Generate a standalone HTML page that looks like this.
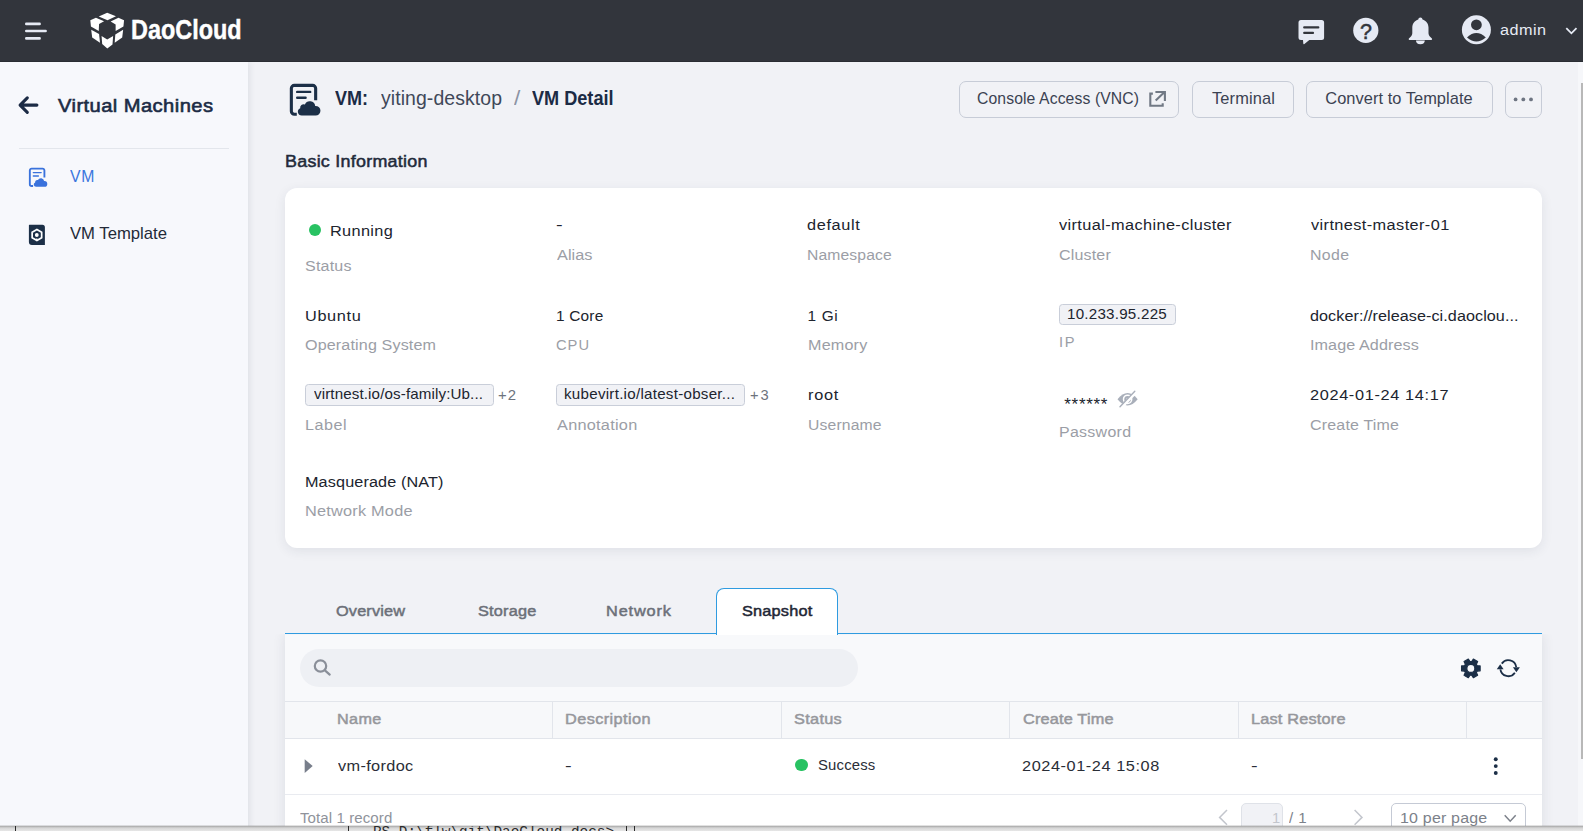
<!DOCTYPE html>
<html lang="en">
<head>
<meta charset="utf-8">
<title>VM Detail - Virtual Machines - DaoCloud</title>
<style>
html,body{margin:0;padding:0}
body{width:1583px;height:831px;overflow:hidden;position:relative;background:#f1f2f6;font-family:"Liberation Sans",sans-serif;font-size:15.4px;color:#20242e}
div,span,header,aside,main,section,nav{box-sizing:border-box}
.abs{position:absolute}
.t{position:absolute;white-space:pre;line-height:normal;transform-origin:0 50%;display:block}
header{position:absolute;left:0;top:0;width:1583px;height:62px;background:#32353c;z-index:5;box-shadow:inset 0 -1px 0 #2a2d33}
aside{position:absolute;left:0;top:62px;width:248px;height:769px;background:#f7f8fc;box-shadow:1px 0 7px rgba(30,40,60,.10);z-index:3}
aside .divider{position:absolute;left:19px;top:86px;width:210px;height:1px;background:#e3e6ec}
main{position:absolute;left:248px;top:62px;width:1335px;height:769px;z-index:1}
.btn{position:absolute;top:81px;height:36.5px;border:1px solid #c7ccd7;border-radius:7px}
.card{position:absolute;left:285px;top:188px;width:1257px;height:360px;background:#fff;border-radius:12px;box-shadow:0 3px 12px rgba(40,50,70,.085)}
.tag{position:absolute;background:#f1f2f6;border:1px solid #c9ced9;border-radius:3.5px}
.dot{position:absolute;width:12px;height:12px;border-radius:50%;background:#28c262}
.tabline{position:absolute;left:285px;top:633px;width:1257px;height:1.3px;background:#2f9be0}
.tabactive{position:absolute;left:715.75px;top:588px;width:121.75px;height:47px;background:#fff;border:1.2px solid #2f9be0;border-bottom:none;border-radius:8px 8px 0 0}
.panel{position:absolute;left:285px;top:634.3px;width:1257px;height:200px;background:#f8f9fb;box-shadow:0 0 12px rgba(40,50,70,.10);clip-path:inset(0 -20px -20px -20px)}
.search{position:absolute;left:300px;top:648.75px;width:557.5px;height:38px;border-radius:19px;background:#eef0f4}
.thead{position:absolute;left:285px;top:701px;width:1257px;height:37.5px;border-top:1px solid #e2e5eb;border-bottom:1px solid #e2e5eb;background:#f7f8fa}
.colsep{position:absolute;top:701px;width:1px;height:37px;background:#e2e5eb}
.trow{position:absolute;left:285px;top:738.5px;width:1257px;height:56px;background:#fff;border-bottom:1px solid #e9ebf0}
.tfoot{position:absolute;left:285px;top:794.5px;width:1257px;height:40px;background:#fff}
.pginput{position:absolute;left:1240.75px;top:803px;width:42.5px;height:36px;background:#f1f2f6;border:1px solid #dfe2e8;border-radius:5px}
.pgsel{position:absolute;left:1390.75px;top:803px;width:135.5px;height:36px;background:#fff;border:1px solid #c5cad5;border-radius:5px}
.sbtrack{position:absolute;left:1578px;top:62px;width:5px;height:764px;background:#f6f7fa;z-index:6}
.sbthumb{position:absolute;left:1581px;top:82.75px;width:2px;height:676.5px;background:#b8b8b8;z-index:7}
.bottom{position:absolute;left:0;top:826px;width:1583px;height:5px;z-index:9;background:linear-gradient(#a4a4a4 0,#c6c6c6 1.2px,#dadada 2.6px,#e6e6e6 100%);overflow:hidden;box-shadow:0 -1px 0 rgba(120,120,120,.22)}
.bottom i{position:absolute;top:0;width:1.3px;height:5px;background:#2a2a2a}
.bottom span{position:absolute;left:373px;top:-2.3px;font-family:"Liberation Mono",monospace;font-size:14.35px;line-height:normal;color:#2b2b2b;white-space:pre}
svg.icons{position:absolute;left:0;top:0;width:1583px;height:831px;z-index:8;pointer-events:none}
.t{z-index:8}
</style>
</head>
<body>
<header></header>
<aside><div class="divider"></div></aside>
<main></main>

<div class="btn" style="left:959px;width:219.5px"></div>
<div class="btn" style="left:1192px;width:101.75px"></div>
<div class="btn" style="left:1306.25px;width:186.25px"></div>
<div class="btn" style="left:1505px;width:36.5px"></div>

<section class="card"></section>
<div class="dot" style="left:308.75px;top:224.25px"></div>
<div class="tag" style="left:1059px;top:304.25px;width:116.75px;height:20.25px"></div>
<div class="tag" style="left:305px;top:384.25px;width:188.75px;height:21.5px"></div>
<div class="tag" style="left:555.75px;top:384.25px;width:188.75px;height:21.5px"></div>

<div class="panel"></div>
<div class="tabline"></div>
<div class="tabactive"></div>
<div class="search"></div>
<div class="thead"></div>
<div class="colsep" style="left:552px"></div>
<div class="colsep" style="left:781px"></div>
<div class="colsep" style="left:1009px"></div>
<div class="colsep" style="left:1238px"></div>
<div class="colsep" style="left:1466px"></div>
<div class="trow"></div>
<div class="tfoot"></div>
<div class="dot" style="left:795px;top:758.5px;width:12.5px;height:12.5px"></div>
<div class="pginput"></div>
<div class="pgsel"></div>

<div class="sbtrack"></div>
<div class="sbthumb"></div>
<div class="bottom"><i style="left:15px"></i><i style="left:347.6px"></i><i style="left:626px"></i><i style="left:634px"></i><span>PS D:\flw\git\DaoCloud-docs&gt;</span></div>

<svg class="icons" viewBox="0 0 1583 831">
<g stroke="#e6eaf4" stroke-width="2.6" stroke-linecap="round"><path d="M26.3 23.9H39.6M26.3 31H45.6M26.3 38.4H39.6"/></g>
<g fill="#fff"><polygon points="98.75,16.56 107.19,12.81 115.94,16.25 107.5,20.31"/><polygon points="90.31,20.31 95.94,17.81 104.06,21.25 99.06,24.06 98.75,30.94 90.94,26.56"/><polygon points="110.63,21.56 118.44,17.81 124.06,20.31 123.44,26.56 115.63,30.94 115.63,24.38"/><polygon points="91.25,29.69 99.06,34.06 100,42.81 92.19,37.5"/><polygon points="123.13,29.69 115.31,34.38 114.69,42.81 122.19,37.5"/><polygon points="101.56,35.94 107.19,39.38 113.13,35.94 112.5,44.38 107.31,48.44 102.19,44.06"/></g>
<path fill="#e6eaf4" d="M1301 20.100h20.600a2.500 2.500 0 0 1 2.500 2.500v14.900a2.500 2.500 0 0 1-2.500 2.500h-12.300l-4.900 3.900a.7.7 0 0 1-1.100-.5l-.3-3.400h-2a2.500 2.500 0 0 1-2.500-2.500v-14.900a2.500 2.500 0 0 1 2.500-2.500z"/>
<path stroke="#32353c" stroke-width="2.2" stroke-linecap="round" d="M1304.200 27.400H1318.300M1304.200 32.900H1313"/>
<circle cx="1365.8" cy="30.4" r="12.6" fill="#e6eaf4"/>
<text x="1365.9" y="38.8" text-anchor="middle" font-family="Liberation Sans, sans-serif" font-weight="400" font-size="21.5" stroke="#32353c" stroke-width="0.5" fill="#32353c">?</text>
<path fill="#e6eaf4" d="M1420.400 17.500c1.200 0 2 .8 2.100 1.900 3.600 1 6 4.200 6 8.200v5.400c0 1.500.6 2.800 1.600 3.800l1.800 1.800c.5.500.2 1.300-.5 1.300h-22c-.7 0-1-.8-.5-1.300l1.800-1.800c1-1 1.600-2.300 1.600-3.800v-5.400c0-4 2.400-7.200 6-8.200.1-1.100.9-1.900 2.100-1.900z"/>
<path fill="#e6eaf4" d="M1416 40.600h8.800a4.400 3.700 0 0 1-8.800 0z"/>
<circle cx="1476.4" cy="29.7" r="14.5" fill="#e6eaf4"/><circle cx="1476.4" cy="24.8" r="5.4" fill="#32353c"/><path fill="#32353c" d="M1467 37.400q9.400-8.800 18.800 0q-9.400 8-18.800 0z"/>
<path fill="none" stroke="#e6eaf4" stroke-width="1.8" d="M1566.300 28.200l5.100 5.100 5.100-5.100"/>
<path fill="none" stroke="#1c2b45" stroke-width="3.1" stroke-linecap="round" stroke-linejoin="round" d="M36.900 105.100H20.400M27.300 97.900L20.100 105.100l7.200 7.200"/>
<g transform="translate(289.8 83.8)"><g fill="none" stroke="#1c2f47" stroke-linecap="butt">
<path stroke-width="3.1" d="M25.85 16.400V4.550a3 3 0 0 0-3-3H4.550a3 3 0 0 0-3 3v22.900a3 3 0 0 0 3 3H7"/>
<path stroke-width="2.4" stroke-linecap="round" d="M7.400 8.100H20.400M7.400 13.900H15.800"/></g>
<path fill="#1c2f47" d="M11.900 31.800a3.800 3.800 0 0 1-1.500-7.300 3.500 3.500 0 0 1 4.700-3.900 5.400 5.400 0 0 1 10.300 1.500 3.200 3.200 0 0 1 .4 0 3.850 3.850 0 0 1 0 9.700z"/></g>
<g transform="translate(28.9 167.75) scale(0.6)"><g fill="none" stroke="#3a72dc" stroke-linecap="butt">
<path stroke-width="3.1" d="M25.85 16.400V4.550a3 3 0 0 0-3-3H4.550a3 3 0 0 0-3 3v22.900a3 3 0 0 0 3 3H7"/>
<path stroke-width="2.4" stroke-linecap="round" d="M7.400 8.100H20.400M7.400 13.900H15.800"/></g>
<path fill="#3a72dc" d="M11.900 31.800a3.800 3.800 0 0 1-1.500-7.300 3.500 3.500 0 0 1 4.700-3.900 5.400 5.400 0 0 1 10.300 1.500 3.200 3.200 0 0 1 .4 0 3.850 3.850 0 0 1 0 9.700z"/></g>
<path fill="#1c2f47" d="M29.400 224.800h13a2.500 2.500 0 0 1 2.500 2.500v17.700h-13a3 3 0 0 1-3-3v-16.700a.5.5 0 0 1 .5-.5z"/>
<polygon fill="none" stroke="#fff" stroke-width="1.7" points="36.90,229.50 41.66,232.25 41.66,237.75 36.90,240.50 32.14,237.75 32.14,232.25"/>
<circle cx="36.8" cy="235" r="1.9" fill="#fff"/><path stroke="#fff" stroke-width="1.3" d="M36.800 238.500V240.600"/>
<g fill="none" stroke="#717985" stroke-width="2.1"><path d="M1152.900 93.600H1150.300V105.800H1162.700V103.200"/><path d="M1155.700 100.500L1164.300 92.300M1155.400 92H1164.900V101"/></g>
<g fill="#6e7582"><circle cx="1515.600" cy="99.400" r="1.900"/><circle cx="1523.300" cy="99.400" r="1.900"/><circle cx="1531" cy="99.400" r="1.900"/></g>
<path fill="#a9afba" d="M1117.500 399.300Q1127.600 386.800 1137.700 399.300Q1127.600 411.800 1117.500 399.300z"/><circle cx="1127.600" cy="399.300" r="4.100" fill="none" stroke="#fff" stroke-width="1.500"/><circle cx="1127.600" cy="399.300" r="1.200" fill="#fff"/>
<path stroke="#fff" stroke-width="3.400" d="M1136.200 391.700L1121.300 407.400"/><path stroke="#a9afba" stroke-width="1.400" stroke-linecap="round" d="M1134.800 391.300L1120 406.800"/>
<g fill="none" stroke="#8a8f99" stroke-width="2.200" stroke-linecap="round"><circle cx="320.500" cy="666" r="5.700"/><path d="M324.900 670.400L329.700 674.600"/></g>
<path fill="#1c2f47" fill-rule="evenodd" stroke="#1c2f47" stroke-width="1.2" stroke-linejoin="round" d="M1477.21 665.71 L1480.13 665.93 L1480.13 670.87 L1477.21 671.09 L1476.35 672.56 L1477.63 675.20 L1473.35 677.67 L1471.70 675.25 L1470.00 675.25 L1468.35 677.67 L1464.07 675.20 L1465.35 672.56 L1464.49 671.09 L1461.57 670.87 L1461.57 665.93 L1464.49 665.71 L1465.35 664.24 L1464.07 661.60 L1468.35 659.13 L1470.00 661.55 L1471.70 661.55 L1473.35 659.13 L1477.63 661.60 L1476.35 664.24Z M1474.85 668.40 a4.0 4.0 0 1 0 -8.0 0 a4.0 4.0 0 1 0 8.0 0Z"/>
<g fill="none" stroke="#1c2f47" stroke-width="1.800"><path d="M1501.75 663.61A8.0 8.0 0 0 1 1516.22 667.09"/><path d="M1514.85 672.79A8.0 8.0 0 0 1 1500.38 669.31"/></g>
<path fill="#1c2f47" d="M1512.900 667.200h7l-3.500 5.100z"/><path fill="#1c2f47" d="M1496.800 669.200h6.800l-3.400-5z"/>
<polygon fill="#787e8b" points="304.700,759.200 312.700,766.100 304.700,773"/>
<g fill="#1c2f47"><circle cx="1495.750" cy="759.300" r="1.950"/><circle cx="1495.750" cy="766.100" r="1.950"/><circle cx="1495.750" cy="773" r="1.950"/></g>
<g fill="none" stroke="#c3c6cd" stroke-width="1.500"><path d="M1227 810L1219.600 817.400 1227 824.800"/><path d="M1354.600 810L1362 817.400 1354.600 824.800"/></g>
<path fill="none" stroke="#7c818a" stroke-width="1.500" d="M1504.700 815.200l5.500 6 5.500-6"/>
</svg>

<span class="t" style='font-family:"Liberation Sans", sans-serif;font-size:28px;font-weight:700;color:#ffffff;left:130.90px;top:13.60px;transform:scaleX(0.8361);-webkit-text-stroke:0.45px #fff;'>DaoCloud</span>
<span class="t" style='font-family:"Liberation Sans", sans-serif;font-size:15.4px;font-weight:400;color:#e6eaf4;left:1500.30px;top:21.00px;transform:scaleX(1.0543);letter-spacing:0.427px;'>admin</span>
<span class="t" style='font-family:"Liberation Sans", sans-serif;font-size:19.0px;font-weight:400;color:#1c2b45;left:57.50px;top:94.60px;transform:scaleX(1.0600);letter-spacing:0.408px;-webkit-text-stroke:0.6px currentColor;'>Virtual Machines</span>
<span class="t" style='font-family:"Liberation Sans", sans-serif;font-size:16.4px;font-weight:400;color:#3b76de;left:70.20px;top:166.90px;transform:scaleX(0.9637);letter-spacing:0.830px;'>VM</span>
<span class="t" style='font-family:"Liberation Sans", sans-serif;font-size:16.4px;font-weight:400;color:#232a38;left:70.20px;top:224.10px;transform:scaleX(1.0172);'>VM Template</span>
<span class="t" style='font-family:"Liberation Sans", sans-serif;font-size:19.4px;font-weight:700;color:#1c2b45;left:335.00px;top:87.40px;transform:scaleX(0.9293);'>VM:</span>
<span class="t" style='font-family:"Liberation Sans", sans-serif;font-size:19.6px;font-weight:400;color:#3f4859;left:381.00px;top:87.40px;transform:scaleX(0.9925);letter-spacing:0.078px;'>yiting-desktop</span>
<span class="t" style='font-family:"Liberation Sans", sans-serif;font-size:19.6px;font-weight:400;color:#8b93a3;left:513.50px;top:87.40px;transform:scaleX(1.1567);'>/</span>
<span class="t" style='font-family:"Liberation Sans", sans-serif;font-size:19.4px;font-weight:700;color:#1c2b45;left:532.25px;top:87.40px;transform:scaleX(0.9341);'>VM Detail</span>
<span class="t" style='font-family:"Liberation Sans", sans-serif;font-size:16.4px;font-weight:400;color:#3b4252;left:976.50px;top:89.10px;transform:scaleX(0.9598);letter-spacing:0.110px;'>Console Access (VNC)</span>
<span class="t" style='font-family:"Liberation Sans", sans-serif;font-size:16.4px;font-weight:400;color:#3b4252;left:1212.00px;top:89.10px;letter-spacing:0.143px;'>Terminal</span>
<span class="t" style='font-family:"Liberation Sans", sans-serif;font-size:16.4px;font-weight:400;color:#3b4252;left:1325.25px;top:89.10px;letter-spacing:0.056px;'>Convert to Template</span>
<span class="t" style='font-family:"Liberation Sans", sans-serif;font-size:16.9px;font-weight:400;color:#222a3a;left:284.50px;top:151.90px;transform:scaleX(1.0600);letter-spacing:0.246px;-webkit-text-stroke:0.5px currentColor;'>Basic Information</span>
<span class="t" style='font-family:"Liberation Sans", sans-serif;font-size:15.4px;font-weight:400;color:#20242e;left:330.25px;top:222.25px;transform:scaleX(1.0594);letter-spacing:0.315px;'>Running</span>
<span class="t" style='font-family:"Liberation Sans", sans-serif;font-size:15.4px;font-weight:400;color:#9b9ea6;left:304.50px;top:257.00px;transform:scaleX(1.0426);letter-spacing:0.192px;'>Status</span>
<span class="t" style='font-family:"Liberation Sans", sans-serif;font-size:15.4px;font-weight:400;color:#20242e;left:556.25px;top:216.00px;transform:scaleX(1.2931);'>-</span>
<span class="t" style='font-family:"Liberation Sans", sans-serif;font-size:15.4px;font-weight:400;color:#9b9ea6;left:556.75px;top:246.00px;transform:scaleX(1.0600);letter-spacing:0.033px;'>Alias</span>
<span class="t" style='font-family:"Liberation Sans", sans-serif;font-size:15.4px;font-weight:400;color:#20242e;left:806.75px;top:216.00px;transform:scaleX(1.0600);letter-spacing:0.591px;'>default</span>
<span class="t" style='font-family:"Liberation Sans", sans-serif;font-size:15.4px;font-weight:400;color:#9b9ea6;left:806.75px;top:246.00px;transform:scaleX(1.0198);letter-spacing:0.123px;'>Namespace</span>
<span class="t" style='font-family:"Liberation Sans", sans-serif;font-size:15.4px;font-weight:400;color:#20242e;left:1059.00px;top:216.00px;transform:scaleX(1.0600);letter-spacing:0.360px;'>virtual-machine-cluster</span>
<span class="t" style='font-family:"Liberation Sans", sans-serif;font-size:15.4px;font-weight:400;color:#9b9ea6;left:1058.50px;top:246.00px;transform:scaleX(1.0410);letter-spacing:0.160px;'>Cluster</span>
<span class="t" style='font-family:"Liberation Sans", sans-serif;font-size:15.4px;font-weight:400;color:#20242e;left:1310.75px;top:216.00px;transform:scaleX(1.0600);letter-spacing:0.377px;'>virtnest-master-01</span>
<span class="t" style='font-family:"Liberation Sans", sans-serif;font-size:15.4px;font-weight:400;color:#9b9ea6;left:1309.75px;top:246.00px;transform:scaleX(1.0327);letter-spacing:0.323px;'>Node</span>
<span class="t" style='font-family:"Liberation Sans", sans-serif;font-size:15.4px;font-weight:400;color:#20242e;left:304.50px;top:307.25px;transform:scaleX(1.0600);letter-spacing:0.591px;'>Ubuntu</span>
<span class="t" style='font-family:"Liberation Sans", sans-serif;font-size:15.4px;font-weight:400;color:#9b9ea6;left:304.50px;top:336.00px;transform:scaleX(1.0472);letter-spacing:0.127px;'>Operating System</span>
<span class="t" style='font-family:"Liberation Sans", sans-serif;font-size:15.4px;font-weight:400;color:#20242e;left:556.00px;top:307.25px;letter-spacing:0.200px;'>1 Core</span>
<span class="t" style='font-family:"Liberation Sans", sans-serif;font-size:15.4px;font-weight:400;color:#9b9ea6;left:556.00px;top:336.00px;transform:scaleX(0.9538);letter-spacing:1.048px;'>CPU</span>
<span class="t" style='font-family:"Liberation Sans", sans-serif;font-size:15.4px;font-weight:400;color:#20242e;left:807.50px;top:307.25px;letter-spacing:0.666px;'>1 Gi</span>
<span class="t" style='font-family:"Liberation Sans", sans-serif;font-size:15.4px;font-weight:400;color:#9b9ea6;left:807.50px;top:336.00px;transform:scaleX(1.0478);letter-spacing:0.191px;'>Memory</span>
<span class="t" style='font-family:"Liberation Sans", sans-serif;font-size:14.3px;font-weight:400;color:#20242e;left:1067.25px;top:306.00px;transform:scaleX(1.0600);letter-spacing:0.222px;'>10.233.95.225</span>
<span class="t" style='font-family:"Liberation Sans", sans-serif;font-size:15.4px;font-weight:400;color:#9b9ea6;left:1058.50px;top:333.00px;transform:scaleX(0.9500);letter-spacing:1.769px;'>IP</span>
<span class="t" style='font-family:"Liberation Sans", sans-serif;font-size:15.4px;font-weight:400;color:#20242e;left:1309.50px;top:307.25px;transform:scaleX(1.0495);letter-spacing:0.066px;'>docker://release-ci.daoclou...</span>
<span class="t" style='font-family:"Liberation Sans", sans-serif;font-size:15.4px;font-weight:400;color:#9b9ea6;left:1309.50px;top:336.00px;transform:scaleX(1.0495);letter-spacing:0.079px;'>Image Address</span>
<span class="t" style='font-family:"Liberation Sans", sans-serif;font-size:14.3px;font-weight:400;color:#20242e;left:313.75px;top:386.25px;transform:scaleX(1.0600);letter-spacing:0.112px;'>virtnest.io/os-family:Ub...</span>
<span class="t" style='font-family:"Liberation Sans", sans-serif;font-size:14.3px;font-weight:400;color:#6d737d;left:498.25px;top:387.00px;transform:scaleX(1.0421);letter-spacing:0.960px;'>+2</span>
<span class="t" style='font-family:"Liberation Sans", sans-serif;font-size:15.4px;font-weight:400;color:#9b9ea6;left:304.50px;top:416.00px;transform:scaleX(1.0485);letter-spacing:0.477px;'>Label</span>
<span class="t" style='font-family:"Liberation Sans", sans-serif;font-size:14.3px;font-weight:400;color:#20242e;left:564.00px;top:386.25px;transform:scaleX(1.0600);letter-spacing:0.244px;'>kubevirt.io/latest-obser...</span>
<span class="t" style='font-family:"Liberation Sans", sans-serif;font-size:14.3px;font-weight:400;color:#6d737d;left:749.50px;top:387.00px;transform:scaleX(1.0268);letter-spacing:1.948px;'>+3</span>
<span class="t" style='font-family:"Liberation Sans", sans-serif;font-size:15.4px;font-weight:400;color:#9b9ea6;left:557.00px;top:416.00px;transform:scaleX(1.0600);letter-spacing:0.233px;'>Annotation</span>
<span class="t" style='font-family:"Liberation Sans", sans-serif;font-size:15.4px;font-weight:400;color:#20242e;left:807.50px;top:385.50px;transform:scaleX(1.0600);letter-spacing:0.669px;'>root</span>
<span class="t" style='font-family:"Liberation Sans", sans-serif;font-size:15.4px;font-weight:400;color:#9b9ea6;left:807.50px;top:416.00px;transform:scaleX(1.0211);letter-spacing:0.140px;'>Username</span>
<span class="t" style='font-family:"Liberation Sans", sans-serif;font-size:17px;font-weight:400;color:#20242e;left:1064.25px;top:394.90px;letter-spacing:0.709px;'>******</span>
<span class="t" style='font-family:"Liberation Sans", sans-serif;font-size:15.4px;font-weight:400;color:#9b9ea6;left:1058.50px;top:423.00px;transform:scaleX(1.0358);letter-spacing:0.276px;'>Password</span>
<span class="t" style='font-family:"Liberation Sans", sans-serif;font-size:15.4px;font-weight:400;color:#20242e;left:1309.50px;top:386.00px;transform:scaleX(1.0600);letter-spacing:0.609px;'>2024-01-24 14:17</span>
<span class="t" style='font-family:"Liberation Sans", sans-serif;font-size:15.4px;font-weight:400;color:#9b9ea6;left:1309.50px;top:416.00px;transform:scaleX(1.0378);letter-spacing:0.193px;'>Create Time</span>
<span class="t" style='font-family:"Liberation Sans", sans-serif;font-size:15.4px;font-weight:400;color:#20242e;left:304.50px;top:473.00px;transform:scaleX(1.0521);letter-spacing:0.127px;'>Masquerade (NAT)</span>
<span class="t" style='font-family:"Liberation Sans", sans-serif;font-size:15.4px;font-weight:400;color:#9b9ea6;left:304.50px;top:502.25px;transform:scaleX(1.0600);letter-spacing:0.198px;'>Network Mode</span>
<span class="t" style='font-family:"Liberation Sans", sans-serif;font-size:15.4px;font-weight:400;color:#6c7079;left:336.25px;top:602.25px;transform:scaleX(1.0600);letter-spacing:0.136px;-webkit-text-stroke:0.5px currentColor;'>Overview</span>
<span class="t" style='font-family:"Liberation Sans", sans-serif;font-size:15.4px;font-weight:400;color:#6c7079;left:477.50px;top:602.25px;transform:scaleX(1.0600);letter-spacing:0.174px;-webkit-text-stroke:0.5px currentColor;'>Storage</span>
<span class="t" style='font-family:"Liberation Sans", sans-serif;font-size:15.4px;font-weight:400;color:#6c7079;left:605.75px;top:602.25px;transform:scaleX(1.0600);letter-spacing:0.811px;-webkit-text-stroke:0.5px currentColor;'>Network</span>
<span class="t" style='font-family:"Liberation Sans", sans-serif;font-size:15.4px;font-weight:400;color:#1f2735;left:741.75px;top:602.25px;transform:scaleX(1.0600);letter-spacing:0.175px;-webkit-text-stroke:0.5px currentColor;'>Snapshot</span>
<span class="t" style='font-family:"Liberation Sans", sans-serif;font-size:15.4px;font-weight:400;color:#96979c;left:336.50px;top:709.75px;transform:scaleX(1.0533);letter-spacing:0.316px;-webkit-text-stroke:0.5px currentColor;'>Name</span>
<span class="t" style='font-family:"Liberation Sans", sans-serif;font-size:15.4px;font-weight:400;color:#96979c;left:565.25px;top:709.75px;transform:scaleX(1.0600);letter-spacing:0.368px;-webkit-text-stroke:0.5px currentColor;'>Description</span>
<span class="t" style='font-family:"Liberation Sans", sans-serif;font-size:15.4px;font-weight:400;color:#96979c;left:794.25px;top:709.75px;transform:scaleX(1.0600);letter-spacing:0.281px;-webkit-text-stroke:0.5px currentColor;'>Status</span>
<span class="t" style='font-family:"Liberation Sans", sans-serif;font-size:15.4px;font-weight:400;color:#96979c;left:1023.25px;top:709.75px;transform:scaleX(1.0600);letter-spacing:0.155px;-webkit-text-stroke:0.5px currentColor;'>Create Time</span>
<span class="t" style='font-family:"Liberation Sans", sans-serif;font-size:15.4px;font-weight:400;color:#96979c;left:1250.50px;top:709.75px;transform:scaleX(1.0600);letter-spacing:0.171px;-webkit-text-stroke:0.5px currentColor;'>Last Restore</span>
<span class="t" style='font-family:"Liberation Sans", sans-serif;font-size:15.4px;font-weight:400;color:#2a2e37;left:337.50px;top:757.00px;transform:scaleX(1.0600);letter-spacing:0.321px;'>vm-fordoc</span>
<span class="t" style='font-family:"Liberation Sans", sans-serif;font-size:15.4px;font-weight:400;color:#2a2e37;left:565.25px;top:757.00px;transform:scaleX(1.2931);'>-</span>
<span class="t" style='font-family:"Liberation Sans", sans-serif;font-size:15.4px;font-weight:400;color:#2a2e37;left:818.25px;top:755.50px;transform:scaleX(0.9670);letter-spacing:0.172px;'>Success</span>
<span class="t" style='font-family:"Liberation Sans", sans-serif;font-size:15.4px;font-weight:400;color:#2a2e37;left:1022.25px;top:757.00px;transform:scaleX(1.0600);letter-spacing:0.530px;'>2024-01-24 15:08</span>
<span class="t" style='font-family:"Liberation Sans", sans-serif;font-size:15.4px;font-weight:400;color:#2a2e37;left:1251.00px;top:757.00px;transform:scaleX(1.2931);'>-</span>
<span class="t" style='font-family:"Liberation Sans", sans-serif;font-size:15.4px;font-weight:400;color:#8f939b;left:300.00px;top:809.00px;transform:scaleX(0.9786);letter-spacing:0.079px;'>Total 1 record</span>
<span class="t" style='font-family:"Liberation Sans", sans-serif;font-size:15.4px;font-weight:400;color:#c3c6cd;left:1271.50px;top:809.00px;transform:scaleX(0.9538);'>1</span>
<span class="t" style='font-family:"Liberation Sans", sans-serif;font-size:15.4px;font-weight:400;color:#7c818a;left:1288.75px;top:809.00px;transform:scaleX(0.9781);letter-spacing:0.511px;'>/ 1</span>
<span class="t" style='font-family:"Liberation Sans", sans-serif;font-size:15.4px;font-weight:400;color:#7c818a;left:1400.25px;top:809.00px;transform:scaleX(1.0377);letter-spacing:0.193px;'>10 per page</span>
</body>
</html>
